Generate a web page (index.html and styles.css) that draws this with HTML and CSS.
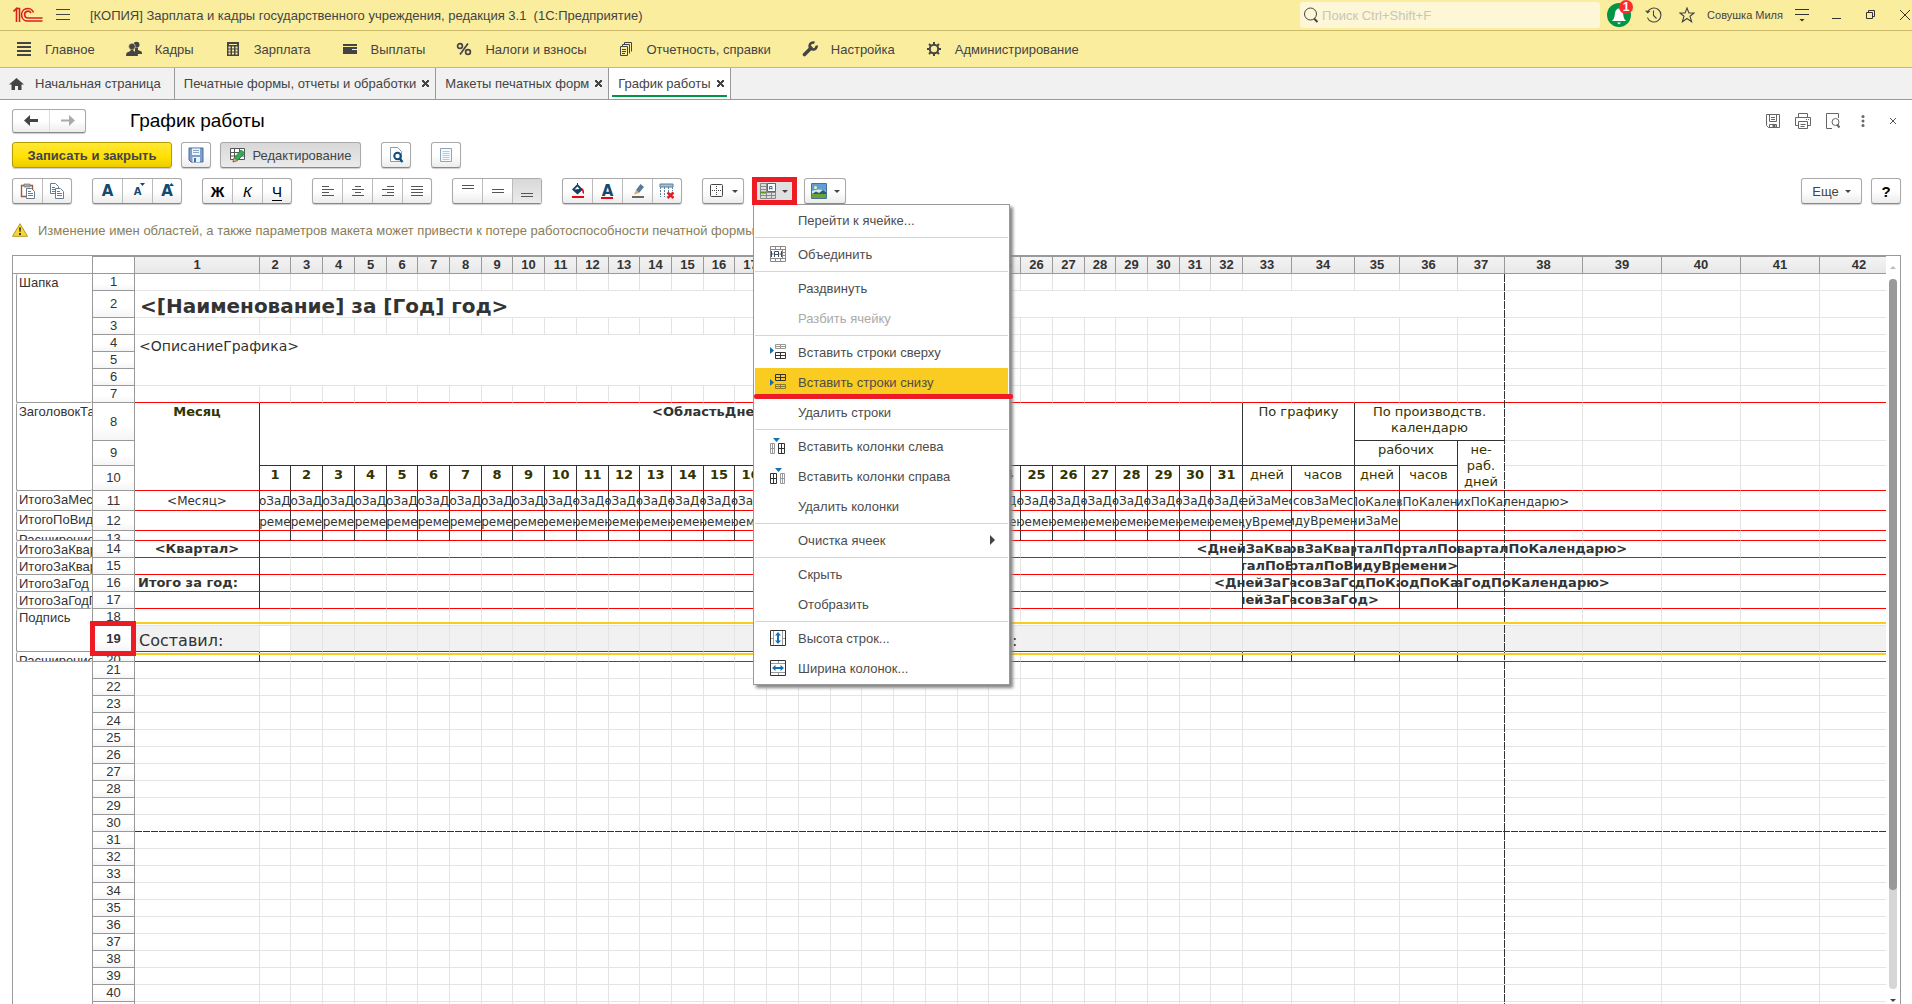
FILE: index.html
```html
<!DOCTYPE html>
<html lang="ru">
<head>
    <meta charset="UTF-8">
    <meta name="viewport" content="width=device-width, initial-scale=1.0">
    <title>График работы</title>
    <link rel="stylesheet" href="styles.css">
</head>
<body>
    <header class="topbar">
        <svg class="logo" width="30" height="16" viewBox="0 0 30 16" fill="none" stroke="#d9201f" stroke-width="1.6">
            <path d="M0.5 4.5L3.5 1.5V15M3.5 1.5H6.5V15"/>
            <path d="M20.5 5.5A6.2 6.2 0 1 0 15 14H29.5"/>
            <path d="M18 6A3.4 3.4 0 1 0 15 11H29.5"/>
        </svg>
        <button class="plain burger" aria-label="Меню">
            <svg width="16" height="14" viewBox="0 0 16 14" stroke="#444" stroke-width="1"><path d="M1 1.5H15M1 6.5H15M1 11.5H15"/></svg>
        </button>
        <div class="app-title">[КОПИЯ] Зарплата и кадры государственного учреждения, редакция 3.1&nbsp; (1С:Предприятие)</div>
        <label class="search">
            <svg width="16" height="16" viewBox="0 0 16 16" fill="none" stroke="#444"><circle cx="7.5" cy="7" r="6"/><path d="M11 11.500L14.500 15" stroke-width="2"/></svg>
            <input type="text" placeholder="Поиск Ctrl+Shift+F" aria-label="Поиск">
        </label>
        <button class="plain bell" aria-label="Оповещения">
            <svg width="24" height="24" viewBox="0 0 24 24"><circle cx="12" cy="12" r="12" fill="#009646"/><path d="M5 18C7.500 16 7.500 13 8 10C8.500 7 10 5.500 12 5.500S15.500 7 16 10C16.500 13 16.500 16 19 18Z" fill="#fff"/><path d="M10 19.500H14L12 21.500Z" fill="#fff"/></svg>
            <span class="badge">1</span>
        </button>
        <button class="plain history" aria-label="История">
            <svg width="17" height="16" viewBox="0 0 17 16" fill="none" stroke="#444" stroke-width="1.1"><path d="M2.500 5.200A7 7 0 1 1 2.400 10.600M8.500 3.500V8.500L11.500 11.500"/><path d="M0 3.500L2.500 6.500L5.500 4Z" fill="#444" stroke="none"/></svg>
        </button>
        <button class="plain star" aria-label="Избранное">
            <svg width="16" height="16" viewBox="0 0 16 16" fill="none" stroke="#444" stroke-width="1.1"><path d="M8 1L9.900 6H15L11 9.200L12.600 14.800L8 11.500L3.400 14.800L5 9.200L1 6H6.100Z"/></svg>
        </button>
        <a class="user" href="#">Совушка Миля</a>
        <button class="plain view" aria-label="Настройки вида">
            <svg width="14" height="14" viewBox="0 0 14 14" stroke="#333"><path d="M0 1.500H14M0 6.500H14"/><path d="M4.500 11L7 13.500L9.500 11Z" fill="#333" stroke="none"/></svg>
        </button>
        <button class="plain win" aria-label="Свернуть"><svg width="10" height="10" viewBox="0 0 10 10" stroke="#333"><path d="M0 8.500H9"/></svg></button>
        <button class="plain win" aria-label="Развернуть"><svg width="10" height="10" viewBox="0 0 10 10" fill="none" stroke="#333"><path d="M.5 2.500H6.500V8.500H.5ZM2.500 2.500V.5H8.500V6.500H6.500"/></svg></button>
        <button class="plain win" aria-label="Закрыть"><svg width="10" height="10" viewBox="0 0 10 10" stroke="#333"><path d="M0 0L10 10M10 0L0 10"/></svg></button>
    </header>

    <nav class="sections">
        <a href="#"><svg width="16" height="16" viewBox="0 0 16 16" stroke="#444" stroke-width="2"><path d="M1 2H15M1 6H15M1 10H15M1 14H15"/></svg>Главное</a>
        <a href="#"><svg width="16" height="16" viewBox="0 0 16 16" fill="#444"><circle cx="10.500" cy="3.800" r="3"/><path d="M9 7H12V9L15.500 10.500Q16 11 16 13H9Z"/><circle cx="6" cy="5.500" r="3.300" stroke="#fbed9e" stroke-width=".6"/><path d="M4.500 8.500H7.500V10L11 11.500Q12 12 12 15H0Q0 12 1 11.500L4.500 10Z"/></svg>Кадры</a>
        <a href="#"><svg width="16" height="16" viewBox="0 0 16 16" fill="none" stroke="#444"><rect x="2" y="1" width="12" height="14" fill="#444" stroke="none"/><path d="M4 3.500H12" stroke="#fbed9e"/><path d="M3.500 6.500H5.500M7 6.500H9M10.500 6.500H12.500M3.500 9.500H5.500M7 9.500H9M10.500 9.500H12.500M3.500 12.500H5.500M7 12.500H9M10.500 12.500H12.500" stroke="#fbed9e" stroke-width="2"/></svg>Зарплата</a>
        <a href="#"><svg width="16" height="16" viewBox="0 0 16 16" fill="#444"><path d="M1 3H15V5H1ZM1 6H15V13H1Z"/><path d="M10 8H15V9H10Z" fill="#fbed9e"/></svg>Выплаты</a>
        <a href="#"><svg width="16" height="16" viewBox="0 0 16 16" fill="none" stroke="#444" stroke-width="1.700"><circle cx="4" cy="5" r="2.400"/><circle cx="12" cy="11" r="2.400"/><path d="M12 2.500L4 13.500"/></svg>Налоги и взносы</a>
        <a href="#"><svg width="16" height="16" viewBox="0 0 16 16" fill="none" stroke="#444"><path d="M2.500 5.500H9.500V14.500H2.500ZM4.500 5V3.500H11.500V12.500M6.500 3V1.500H13.500V10.500M4 8.500H8M4 10.500H8M4 12.500H7"/></svg>Отчетность, справки</a>
        <a href="#"><svg width="16" height="16" viewBox="0 0 16 16" fill="none" stroke="#444"><path d="M2.500 13.500L9 7" stroke-width="3.600" stroke-linecap="round"/><path d="M12.500 1.800A3.500 3.500 0 1 0 14.600 4.500" stroke-width="2.600"/></svg>Настройка</a>
        <a href="#"><svg width="16" height="16" viewBox="0 0 16 16" fill="none" stroke="#444" stroke-width="2"><circle cx="8" cy="8" r="4.200"/><path d="M8 1V4M8 12V15M1 8H4M12 8H15M3 3L5 5M11 11L13 13M13 3L11 5M5 11L3 13"/></svg>Администрирование</a>
    </nav>

    <nav class="tabs">
        <a class="tab home" href="#"><svg width="15" height="14" viewBox="0 0 15 14" fill="#444"><path d="M7.500 1L0 7.500H2.500V13H6V9H9V13H12.500V7.500H15Z"/></svg>Начальная страница</a>
        <a class="tab" href="#">Печатные формы, отчеты и обработки<span class="close"></span></a>
        <a class="tab" href="#">Макеты печатных форм<span class="close"></span></a>
        <a class="tab active" href="#">График работы<span class="close"></span></a>
    </nav>

    <main class="form">
        <div class="form-head">
            <div class="group nav-buttons">
                <button aria-label="Назад"><svg width="15" height="11" viewBox="0 0 15 11"><path d="M0 5.500L6 0V4H14V7H6V11Z" fill="#444"/></svg></button>
                <button aria-label="Вперед"><svg width="15" height="11" viewBox="0 0 15 11"><path d="M15 5.500L9 0V4.500H1V6.500H9V11Z" fill="#aaa"/></svg></button>
            </div>
            <h1>График работы</h1>
            <div class="form-tools">
                <button class="plain" aria-label="Сохранить"><svg width="16" height="16" viewBox="0 0 16 16" fill="none" stroke="#666"><path d="M1.500 1.500H14.500V14.500H3.500L1.500 12.500ZM4.500 2V8.500H11.500V2M6 4.500H10M6 6.500H10M4.500 14V11.500H11.500V14"/><path d="M8 12H10V14H8Z" fill="#666"/></svg></button>
                <button class="plain" aria-label="Печать"><svg width="16" height="16" viewBox="0 0 16 16" fill="none" stroke="#666"><path d="M3.500 4.500V.5H12.500V4.500M3.500 12.500H.5V4.500H15.500V12.500H12.500M3.500 8.500H12.500V15.500H3.500ZM5.500 11.500H10.500M5.500 13.500H9.500M11 6.500H12M13 6.500H14"/></svg></button>
                <button class="plain" aria-label="Предварительный просмотр"><svg width="16" height="16" viewBox="0 0 16 16" fill="none" stroke="#666"><path d="M7 15.500H1.500V.5H13.500V5"/><circle cx="10.500" cy="9" r="3.500"/><path d="M12 11.500L14.500 14.500" stroke-width="2"/></svg></button>
                <button class="plain" aria-label="Ещё"><svg width="16" height="16" viewBox="0 0 16 16" fill="#666"><circle cx="8" cy="3.500" r="1.500"/><circle cx="8" cy="8" r="1.500"/><circle cx="8" cy="12.500" r="1.500"/></svg></button>
                <button class="plain" aria-label="Закрыть форму"><svg width="16" height="16" viewBox="0 0 16 16" stroke="#555"><path d="M5 5L11 11M11 5L5 11"/></svg></button>
            </div>
        </div>

        <div class="toolbar commands">
            <button class="btn primary">Записать и закрыть</button>
            <button class="btn icon" aria-label="Записать"><svg width="16" height="16" viewBox="0 0 16 16"><path d="M1 1H15V15H3L1 13Z" fill="#7d9fc9" stroke="#456f9f"/><path d="M4 1.500H12V8H4ZM4.500 10H12V15H4.500Z" fill="#edf5fc"/><path d="M5 3.500H11M5 5.500H11" stroke="#8aa6c5"/><path d="M6 11H8V15H6Z" fill="#456f9f"/></svg></button>
            <button class="btn edit pressed">
                <svg width="17" height="16" viewBox="0 0 17 16"><path d="M1.500 1.500H15.500V12.500H1.500ZM1.500 5.500H15.500M1.500 9H15.500M5.500 1V13M10.500 1V13" fill="#fff" stroke="#555"/><path d="M4 15L5 11L12 3L16 6L8.500 13.500Z" fill="#36a85c" stroke="#1f7a41" stroke-width=".7"/><path d="M4 15L5 11L8.500 13.500Z" fill="#e3b070" stroke="#7a5b30" stroke-width=".5"/></svg>
                Редактирование
            </button>
            <button class="btn icon gap" aria-label="Просмотр"><svg width="16" height="16" viewBox="0 0 16 16" fill="none"><path d="M2.500 .5H9.500L13.500 4.500V14.500H2.500Z" fill="#fff" stroke="#8a9bab"/><circle cx="9.500" cy="9" r="3.200" stroke="#0b4f82" stroke-width="2"/><path d="M11.500 11.500L14.500 15" stroke="#0b4f82" stroke-width="2.400"/></svg></button>
            <button class="btn icon gap" aria-label="Свойства"><svg width="16" height="16" viewBox="0 0 16 16"><path d="M2.500 1.500H13.500V14.500H2.500Z" fill="#f5fafd" stroke="#8da5b8"/><path d="M4.500 4.500H11.500M4.500 6.500H11.500M4.500 8.500H11.500M4.500 10.500H11.500M4.500 12.500H11.500" stroke="#b4cddd"/></svg></button>
        </div>

        <div class="toolbar format">
            <div class="group">
                <button aria-label="Вставить"><svg width="16" height="16" viewBox="0 0 16 16" fill="none"><path d="M1.500 2.500H12.500V13.500H1.500Z" stroke="#a05a38" stroke-width="1.400"/><path d="M4 1H10V4H4Z" fill="#aaa" stroke="#777" stroke-width=".7"/><path d="M6.500 5.500H11.500L14.500 8.500V15.500H6.500Z" fill="#fff" stroke="#6a7d90"/><path d="M8 8.500H11M8 10.500H13M8 12.500H13" stroke="#6a7d90"/></svg></button>
                <button aria-label="Копировать"><svg width="16" height="16" viewBox="0 0 16 16" fill="#fff" stroke="#6a7d90"><path d="M1.500 .5H6.500L9.500 3.500V10.500H1.500ZM3 4.500H6M3 6.500H8M3 8.500H8"/><path d="M6.500 5.500H11.500L14.500 8.500V15.500H6.500ZM8 8.500H11M8 10.500H13M8 12.500H13"/></svg></button>
            </div>
            <div class="group">
                <button class="glyph navy" aria-label="Шрифт">А</button>
                <button class="glyph navy small" aria-label="Уменьшить шрифт">А<svg class="corner" width="5" height="3" viewBox="0 0 5 3"><path d="M0 0H5L2.500 3Z" fill="#134a6e"/></svg></button>
                <button class="glyph navy" aria-label="Увеличить шрифт">А<svg class="corner" width="5" height="3" viewBox="0 0 5 3"><path d="M0 3H5L2.500 0Z" fill="#134a6e"/></svg></button>
            </div>
            <div class="group">
                <button class="glyph">Ж</button>
                <button class="glyph italic">К</button>
                <button class="glyph under">Ч</button>
            </div>
            <div class="group">
                <button aria-label="По левому краю"><svg width="16" height="16" viewBox="0 0 16 16" stroke="#555"><path d="M2 3.500H9M2 6.500H14M2 9.500H9M2 12.500H14"/></svg></button>
                <button aria-label="По центру"><svg width="16" height="16" viewBox="0 0 16 16" stroke="#555"><path d="M5 3.500H11M2 6.500H14M5 9.500H11M2 12.500H14"/></svg></button>
                <button aria-label="По правому краю"><svg width="16" height="16" viewBox="0 0 16 16" stroke="#555"><path d="M7 3.500H14M2 6.500H14M7 9.500H14M2 12.500H14"/></svg></button>
                <button aria-label="По ширине"><svg width="16" height="16" viewBox="0 0 16 16" stroke="#555"><path d="M2 3.500H14M2 6.500H14M2 9.500H14M2 12.500H14"/></svg></button>
            </div>
            <div class="group">
                <button aria-label="По верху"><svg width="16" height="16" viewBox="0 0 16 16" stroke="#555"><path d="M2 2.500H14M2 5.500H14"/></svg></button>
                <button aria-label="По середине"><svg width="16" height="16" viewBox="0 0 16 16" stroke="#555"><path d="M2 6.500H14M2 9.500H14"/></svg></button>
                <button class="pressed" aria-label="По низу"><svg width="16" height="16" viewBox="0 0 16 16" stroke="#555"><path d="M2 10.500H14M2 13.500H14"/></svg></button>
            </div>
            <div class="group">
                <button aria-label="Цвет фона"><svg width="16" height="16" viewBox="0 0 16 16"><path d="M7.500 1L13 6.500L7.500 11.500L2 6.500Z" fill="#123f63"/><path d="M7.500 0V5" stroke="#123f63"/><path d="M4.500 6.500L7.500 3.500L9.500 6Z" fill="#fff"/><path d="M11 5Q14.500 5 14 11Q12 10 12 7Z" fill="#e30613"/><path d="M2 13H14V15H2Z" fill="#e30613"/></svg></button>
                <button class="glyph navy red-line" aria-label="Цвет текста">А</button>
                <button aria-label="Цвет рамки"><svg width="16" height="16" viewBox="0 0 16 16"><path d="M6 7L10.500 1L14 4L9 10Z" fill="#577a99"/><path d="M4 11.500L6 7L9 10Z" fill="#d9a864"/><path d="M2 13H14V15H2Z" fill="#666"/></svg></button>
                <button aria-label="Очистить"><svg width="16" height="16" viewBox="0 0 16 16" fill="none" stroke="#5d7f9b"><path d="M1 1H14V4H1Z" fill="#a9c0d4"/><path d="M1.500 4V14M5.500 4V14M9.500 4V14M13.500 4V8" stroke-dasharray="2 1"/><path d="M8.500 9.500L14.500 15M14.500 9.500L8.500 15" stroke="#d92027" stroke-width="2.400"/></svg></button>
            </div>
            <div class="group">
                <button class="drop" aria-label="Рамки"><svg width="16" height="16" viewBox="0 0 16 16" fill="none" stroke="#444"><rect x="1.500" y="1.500" width="12" height="12" rx="1"/><path d="M7.500 3V12M3 7.500H12" stroke-dasharray="1 1"/></svg><i class="arrow"></i></button>
            </div>
            <div class="menu-anchor">
                <button class="cells-button" aria-label="Ячейки"><svg width="17" height="16" viewBox="0 0 17 16" fill="none" stroke="#888"><path d="M.5 .5H15.500V15.500H.5ZM.5 3.500H7M.5 6.500H7M.5 12.500H15.500M.5 9.500H15.500M6.500 0V16M11.500 9V16" fill="#ddd"/><path d="M7.500 .5H15.500V8.500H7.500Z" fill="#fff" stroke="#3d6f99"/><path d="M9.500 6.500V3.500H12V6.500M9.500 5.500H12" stroke="#3d6f99"/><path d="M0 9.500H6" stroke="#5a9b1e" stroke-width="2"/></svg><i class="arrow"></i></button>
                <ul class="menu">
                    <li><button>Перейти к ячейке...</button></li>
                    <li class="sep"></li>
                    <li><button><svg width="16" height="16" viewBox="0 0 16 16" fill="none" stroke="#888"><path d="M.5 .5H15.500V15.500H.5ZM0 3.500H16M0 12.500H16M5.500 0V3M10.500 0V3M5.500 13V16M10.500 13V16M12.500 3V13M12.500 6.500H16M12.500 9.500H16"/><path d="M1.500 5V11M11.500 5V11M1.500 8H3.500M9.500 8H11.500M4.500 11V5.500H8.500V11M4.500 8.500H8.500" stroke="#3b4f63"/></svg>Объединить</button></li>
                    <li class="sep"></li>
                    <li><button>Раздвинуть</button></li>
                    <li><button disabled>Разбить ячейку</button></li>
                    <li class="sep"></li>
                    <li><button><svg width="16" height="16" viewBox="0 0 16 16" fill="none"><path d="M0 3L4 6.500L0 10Z" fill="#1070b8"/><path d="M5.500 .5H15.500V4.500H5.500ZM5 2.500H16M10.500 0V5" stroke="#999"/><path d="M5.500 8.500H15.500V14.500H5.500ZM5 11.500H16M10.500 8V15" stroke="#333"/></svg>Вставить строки сверху</button></li>
                    <li class="current"><button><svg width="16" height="16" viewBox="0 0 16 16" fill="none"><path d="M0 5L4 8.500L0 12Z" fill="#1070b8"/><path d="M5.500 .5H15.500V6.500H5.500ZM5 3.500H16M10.500 0V7" stroke="#333"/><path d="M5.500 10.500H15.500V14.500H5.500ZM5 12.500H16M10.500 10V15" stroke="#8a7a2c"/></svg>Вставить строки снизу</button></li>
                    <li><button>Удалить строки</button></li>
                    <li class="sep"></li>
                    <li><button><svg width="16" height="16" viewBox="0 0 16 16" fill="none"><path d="M3 0H10L6.500 4Z" fill="#1070b8"/><path d="M.5 5.500H4.500V15.500H.5ZM2.500 5V16M0 10.500H5" stroke="#999"/><path d="M8.500 5.500H14.500V15.500H8.500ZM11.500 5V16M8 10.500H15" stroke="#333"/></svg>Вставить колонки слева</button></li>
                    <li><button><svg width="16" height="16" viewBox="0 0 16 16" fill="none"><path d="M5 0H12L8.500 4Z" fill="#1070b8"/><path d="M.5 5.500H6.500V15.500H.5ZM3.500 5V16M0 10.500H7" stroke="#333"/><path d="M10.500 5.500H14.500V15.500H10.500ZM12.500 5V16M10 10.500H15" stroke="#999"/></svg>Вставить колонки справа</button></li>
                    <li><button>Удалить колонки</button></li>
                    <li class="sep"></li>
                    <li><button>Очистка ячеек<i class="sub"></i></button></li>
                    <li class="sep"></li>
                    <li><button>Скрыть</button></li>
                    <li><button>Отобразить</button></li>
                    <li class="sep"></li>
                    <li><button><svg width="16" height="16" viewBox="0 0 16 16" fill="none"><path d="M.5 .5H15.500V15.500H.5Z" stroke="#333"/><path d="M3.500 1V15M12.500 1V15M1 8.500H3M13 8.500H15" stroke="#999"/><path d="M8 2L11 5.500H9V10.500H11L8 14L5 10.500H7V5.500H5Z" fill="#1070b8"/></svg>Высота строк...</button></li>
                    <li><button><svg width="16" height="16" viewBox="0 0 16 16" fill="none"><path d="M.5 .5H15.500V15.500H.5Z" stroke="#333"/><path d="M1 3.500H15M1 12.500H15M8.500 1V3M8.500 13V15" stroke="#999"/><path d="M2 8L5.500 5V7H10.500V5L14 8L10.500 11V9H5.500V11Z" fill="#1070b8"/></svg>Ширина колонок...</button></li>
                </ul>
            </div>
            <div class="group picture">
                <button class="drop" aria-label="Картинка"><svg width="16" height="16" viewBox="0 0 16 16"><path d="M1 1H15V15H1Z" fill="#5f9ed6"/><path d="M1 8Q8 5 15 8V11H1Z" fill="#d3e8f8"/><path d="M1 11L5 8.500L8 10L12 7L15 9V12H1Z" fill="#335577"/><path d="M1 11H15V15H1Z" fill="#68a52d"/><circle cx="4.500" cy="4.500" r="1.500" fill="#fff26b"/><path d="M.5 .5H15.500V15.500H.5Z" fill="none" stroke="#45729b"/></svg><i class="arrow"></i></button>
            </div>
            <button class="btn more">Еще<i class="arrow"></i></button>
            <button class="btn icon help">?</button>
        </div>

        <p class="warning">
            <svg width="16" height="14" viewBox="0 0 16 14"><path d="M8 .7L15.500 13.300H.5Z" fill="#f7d63a" stroke="#b99a1c"/><path d="M7 4.500H9L8.500 9H7.500ZM7 10H9V12H7Z" fill="#333"/></svg>
            Изменение имен областей, а также параметров макета может привести к потере работоспособности печатной формы.
        </p>

        <div class="sheet">
            <div class="sheet-view">
                <table id="grid"></table>
                <div id="break-v" class="page-break vertical"></div>
                <div id="break-h" class="page-break horizontal"></div>
                <div id="selection" class="selection"></div>
                <div id="row-mark" class="row-mark"></div>
            </div>
            <div class="scrollbar">
                <i class="up"></i>
                <div class="track"><div class="thumb"></div></div>
                <i class="down"></i>
            </div>
        </div>
    </main>

    <script src="sheet.js"></script>
</body>
</html>
```
FILE: styles.css
```css
* {
    box-sizing: border-box;
}

body {
    margin: 0;
    height: 100vh;
    display: flex;
    flex-direction: column;
    overflow: hidden;
    background: #fff;
    color: #444;
    font-family: "Liberation Sans", Arial, sans-serif;
    font-size: 13px;
}

a {
    color: inherit;
    text-decoration: none;
}

svg {
    display: block;
    flex: none;
}

button,
input {
    font: inherit;
    color: inherit;
    margin: 0;
    padding: 0;
}

button.plain {
    display: flex;
    align-items: center;
    justify-content: center;
    border: none;
    background: none;
}

/* title bar */
.topbar {
    display: flex;
    align-items: center;
    flex: none;
    height: 31px;
    padding-left: 13px;
    background: #fbed9e;
    border-bottom: 1px solid #c9b968;
}

.burger {
    margin-left: 12px;
    width: 16px;
}

.app-title {
    flex: 1;
    margin-left: 19px;
}

.search {
    display: flex;
    align-items: center;
    gap: 3px;
    width: 300px;
    height: 26px;
    padding-left: 3px;
    border-radius: 3px;
    background: #fdf6d7;
}

.search input {
    flex: 1;
    min-width: 0;
    border: none;
    outline: none;
    background: none;
}

.search input::placeholder {
    color: #c8c6b8;
}

.bell {
    position: relative;
    margin-left: 7px;
}

.badge {
    position: absolute;
    top: -3px;
    right: -2px;
    width: 14px;
    height: 14px;
    border-radius: 7px;
    background: #fc2b2e;
    color: #fff;
    font-size: 12px;
    font-weight: bold;
    line-height: 14px;
}

.history {
    margin-left: 14px;
}

.star {
    margin-left: 17px;
}

.user {
    margin-left: 12px;
    font-size: 11px;
}

.view {
    margin-left: 12px;
}

.win {
    width: 10px;
    margin-left: 24px;
}

.view + .win {
    margin-left: 23px;
}

.win:last-child {
    margin-right: 2px;
}

/* sections */
.sections {
    display: flex;
    align-items: center;
    flex: none;
    gap: 31px;
    height: 37px;
    padding-left: 16px;
    background: #fbed9e;
    border-bottom: 1px solid #c9b968;
}

.sections a {
    display: flex;
    align-items: center;
    gap: 13px;
}

/* open windows */
.tabs {
    display: flex;
    flex: none;
    height: 32px;
    background: #f1f1f1;
    border-bottom: 1px solid #999;
}

.tab {
    position: relative;
    display: flex;
    align-items: center;
    padding: 0 6px 0 9px;
    border-right: 1px solid #999;
}

.tab.home {
    gap: 11px;
    padding-right: 13px;
}

.tab.active {
    background: #fff;
}

.tab.active::after {
    content: "";
    position: absolute;
    left: 3px;
    right: 3px;
    bottom: 2px;
    height: 2px;
    background: #009646;
}

.close {
    width: 7px;
    height: 7px;
    margin-left: 6px;
    background:
        linear-gradient(45deg, transparent 42%, #444 42% 58%, transparent 58%),
        linear-gradient(135deg, transparent 42%, #444 42% 58%, transparent 58%);
}

/* form */
.form {
    display: flex;
    flex-direction: column;
    flex: 1;
    min-height: 0;
    padding: 8px 11px 0 12px;
}

.form-head {
    display: flex;
    align-items: center;
    flex: none;
    height: 25px;
}

h1 {
    flex: 1;
    margin: 0 0 0 44px;
    color: #000;
    font-size: 19px;
    font-weight: normal;
}

.form-tools {
    display: flex;
    margin-right: -7px;
}

.form-tools button {
    width: 30px;
}

.toolbar {
    display: flex;
    flex: none;
    height: 27px;
}

.commands {
    margin-top: 9px;
}

.format {
    gap: 20px;
    margin-top: 9px;
}

.btn,
.group {
    border: 1px solid #aaa;
    border-bottom-color: #888;
    border-radius: 3px;
    background: linear-gradient(#fff 50%, #ececec);
    box-shadow: 0 1px 1px #ccc;
}

.btn {
    display: flex;
    align-items: center;
    justify-content: center;
    height: 26px;
}

.btn.icon {
    width: 30px;
}

.btn.primary {
    width: 160px;
    border-color: #b39b00;
    background: linear-gradient(#ffe838, #ffe000 60%, #edcb00);
    font-weight: bold;
}

.primary + .icon,
.edit {
    margin-left: 9px;
}

.btn.edit {
    width: 141px;
    gap: 6px;
}

.btn.gap {
    margin-left: 20px;
}

.pressed,
.group .pressed {
    background: linear-gradient(#d8d8d8, #ebebeb);
}

.group {
    display: flex;
    height: 26px;
}

.group button {
    position: relative;
    display: flex;
    align-items: center;
    justify-content: center;
    width: 30px;
    border: none;
    border-left: 1px solid #bbb;
    background: none;
}

.group button:first-child {
    width: 29px;
    border-left: none;
}

.group button:last-child {
    width: 29px;
}

.nav-buttons {
    height: 24px;
}

.group.nav-buttons button {
    width: 36px;
    border-color: #ddd;
}

.glyph {
    color: #000;
    font-size: 15px;
    font-weight: bold;
}

.group .navy {
    color: #134a6e;
    font-family: "DejaVu Sans", Verdana, sans-serif;
    font-size: 15px;
}

.group .small {
    font-size: 10px;
}

.group .italic {
    font-style: italic;
    font-weight: normal;
}

.group .under {
    font-weight: normal;
    text-decoration: underline;
    text-underline-offset: 3px;
}

.corner {
    position: absolute;
    top: 4px;
    right: 7px;
}

.red-line::after {
    content: "";
    position: absolute;
    left: 8px;
    bottom: 4px;
    width: 12px;
    height: 2px;
    background: #e30613;
}

.group .drop:first-child {
    width: 40px;
    gap: 7px;
}

.arrow {
    border: 3px solid transparent;
    border-top-color: #444;
    border-bottom: none;
}

.more {
    gap: 6px;
    width: 61px;
    margin-left: auto;
}

.btn.help {
    margin-left: -11px;
    color: #000;
    font-size: 15px;
    font-weight: bold;
}

/* cells menu */
.menu-anchor {
    position: relative;
    width: 45px;
    height: 28px;
    margin: -1px -13px 0 -12px;
}

.cells-button {
    position: relative;
    z-index: 6;
    display: flex;
    align-items: center;
    gap: 5px;
    width: 45px;
    height: 28px;
    padding-left: 3px;
    border: 5px solid #ed1c24;
    background: #e0e0e0;
}

.menu {
    position: absolute;
    z-index: 5;
    top: 27px;
    left: 1px;
    width: 257px;
    margin: 0;
    padding: 1px 1px 0;
    border: 1px solid #999;
    background: #fff;
    box-shadow: 3px 3px 3px #888;
    list-style: none;
}

.menu button {
    display: flex;
    align-items: center;
    width: 100%;
    height: 30px;
    padding: 0 0 2px 43px;
    border: none;
    background: none;
    color: #4d4d4d;
}

.menu svg {
    margin: 0 12px 0 -28px;
}

.menu button:disabled {
    color: #aaa;
}

.menu .sep {
    height: 1px;
    margin: 1px 0 2px;
    background: #d8d5c5;
}

.menu .current {
    position: relative;
    background: #facb20;
}

.menu .current::after {
    content: "";
    position: absolute;
    left: -1px;
    right: -5px;
    bottom: -1px;
    height: 5px;
    border-radius: 2px;
    background: #ed1c24;
}

.sub {
    margin: 0 13px 0 auto;
    border: 5px solid transparent;
    border-left-color: #444;
    border-right: none;
}

.warning {
    display: flex;
    align-items: center;
    flex: none;
    gap: 10px;
    height: 14px;
    margin: 18px 0;
    color: #8a7d5a;
}

/* spreadsheet */
.sheet {
    display: flex;
    flex: 1;
    min-height: 0;
    border: 1px solid #999;
    border-bottom: none;
}

.sheet-view {
    position: relative;
    flex: 1;
    min-width: 0;
    overflow: hidden;
}

#grid {
    table-layout: fixed;
    border-collapse: separate;
    border-spacing: 0;
    color: #333;
}

#grid th,
#grid td {
    padding: 0;
    border: 0 solid #e4e4e4;
    border-width: 0 1px 1px 0;
    font-weight: normal;
}

#grid thead th {
    border-color: #999;
    background: linear-gradient(#f4f4f4, #e8e8e8);
    font-weight: bold;
    line-height: 16px;
    padding-top: 1px;
    box-shadow: inset 0 1px #999;
}

#grid thead th.corner-name,
#grid thead th.corner-num {
    background: #fff;
}

#grid thead th.corner-name {
    box-shadow: none;
}

#grid th.num {
    border-color: #999;
    background: linear-gradient(#fff 60%, #f5f5f5);
}

#grid th.name {
    border-width: 0 1px 0 0;
    border-color: #999;
    text-align: left;
    vertical-align: top;
}

.area {
    margin-left: 3px;
    padding-left: 2px;
    border: 1px solid #999;
    border-width: 0 0 1px 1px;
    border-radius: 2px;
    overflow: hidden;
    line-height: 17px;
    white-space: nowrap;
}

.cell {
    display: flex;
    align-items: safe center;
    overflow: hidden;
    font-family: "DejaVu Sans", Verdana, sans-serif;
    font-size: 12px;
    line-height: 16px;
    white-space: nowrap;
}

.num .cell {
    justify-content: center;
    font-family: "Liberation Sans", Arial, sans-serif;
    font-size: 13px;
}

#grid .edge-right {
    border-right-color: #333;
}

#grid .edge-bottom {
    border-bottom-color: #333;
}

#grid .area-end {
    border-bottom-color: #f00;
}

.center .cell {
    justify-content: center;
    text-align: center;
}

.top .cell {
    align-items: flex-start;
    padding-top: 1px;
}

.low .cell {
    align-items: flex-end;
}

.head .cell {
    color: #333300;
    font-size: 13px;
}

.bold .cell {
    font-size: 13px;
    font-weight: bold;
}

.total .cell {
    padding-left: 3px;
}

.wrap .cell {
    white-space: pre-line;
}

.spill-left .cell {
    overflow: visible;
    clip-path: inset(0 0 0 -100px);
}

.spill-right .cell {
    overflow: visible;
    clip-path: inset(0 -200px 0 0);
}

.spill-next .cell {
    overflow: visible;
    clip-path: inset(0 -45px 0 0);
}

.title .cell {
    align-items: flex-end;
    padding-left: 5px;
    font-size: 20px;
    line-height: 22px;
}

.note .cell {
    align-items: flex-start;
    padding: 3px 0 0 4px;
    font-size: 14px;
}

.sign .cell {
    align-items: flex-end;
    padding-left: 4px;
    font-size: 16px;
    line-height: 20px;
}

/* selected row */
.selected td {
    background: #f1f1f1;
}

.selected td.active {
    background: #fff;
}

.selected .num .cell {
    font-weight: bold;
}

.selection {
    position: absolute;
    left: 122px;
    right: 0;
    height: 33px;
    border: solid #facb20;
    border-width: 2px 0;
}

.row-mark {
    position: absolute;
    left: 77px;
    width: 46px;
    height: 35px;
    border: 5px solid #ed1c24;
}

.page-break {
    position: absolute;
}

.page-break.vertical {
    top: 18px;
    bottom: 0;
    width: 1px;
    background: repeating-linear-gradient(#333 0 8px, #fff 8px 9px);
}

.page-break.horizontal {
    left: 122px;
    right: 0;
    height: 1px;
    background: repeating-linear-gradient(90deg, #333 0 7px, #fff 7px 8px);
}

.scrollbar {
    display: flex;
    flex-direction: column;
    align-items: center;
    flex: none;
    width: 14px;
    padding: 10px 0 0;
}

.up {
    border: 3px solid transparent;
    border-top: none;
    border-bottom-color: #bbb;
}

.down {
    margin: 10px 0 2px;
    border: 3px solid transparent;
    border-bottom: none;
    border-top-color: #444;
}

.track {
    flex: 1;
    width: 8px;
    margin-top: 10px;
    border-radius: 4px;
    background: #d6d6d6;
}

.thumb {
    height: 86%;
    border-radius: 4px;
    background: #999;
}
```
FILE: sheet.js
```javascript
const NAME_WIDTH = 80;
const NUM_WIDTH = 42;
const ROW_COUNT = 41;

const colWidths = [125,
    31, 32, 32, 32, 31, 32, 32, 31, 32, 32, 32, 31, 32, 32, 31,
    32, 32, 32, 31, 32, 32, 32, 31, 32, 32, 32, 31, 32, 32, 31, 32,
    49, 63, 45, 58, 47, 78, 79, 79, 79, 79];

const rowHeights = { 2: 27, 8: 38, 9: 25, 10: 25, 11: 20, 12: 20, 13: 10, 19: 26, 20: 10 };
const areaEnds = [7, 10, 11, 12, 13, 14, 15, 16, 17, 19, 20];

const areas = {
    1: ['Шапка', 7],
    8: ['ЗаголовокТаблицы', 3],
    11: ['ИтогоЗаМесяц', 1],
    12: ['ИтогоПоВидуВремени', 1],
    13: ['Расширение', 1],
    14: ['ИтогоЗаКвартал', 1],
    15: ['ИтогоЗаКварталПоВидуВремени', 1],
    16: ['ИтогоЗаГод', 1],
    17: ['ИтогоЗаГодПоВидуВремени', 1],
    18: ['Подпись', 2],
    20: ['Расширение', 1]
};

// key is "row:column"
const cells = {
    '2:1': { text: '<[Наименование] за [Год] год>', cols: 37, cls: 'bold title' },
    '4:1': { text: '<ОписаниеГрафика>', cols: 20, rows: 3, cls: 'note' },
    '8:1': { text: 'Месяц', rows: 3, cls: 'head bold center top' },
    '8:2': { text: '<ОбластьДнейПоМесяцу>', cols: 31, rows: 2, cls: 'bold center top edge-bottom' },
    '8:33': { text: 'По графику', cols: 2, rows: 2, cls: 'head center top edge-bottom' },
    '8:35': { text: 'По производств.\nкалендарю', cols: 3, cls: 'head center top wrap edge-bottom' },
    '9:35': { text: 'рабочих', cols: 2, cls: 'head center top edge-bottom' },
    '9:37': { text: 'не-\nраб.\nдней', rows: 2, cls: 'head center top wrap' },
    '10:33': { text: 'дней', cls: 'head center top' },
    '10:34': { text: 'часов', cls: 'head center top' },
    '10:35': { text: 'дней', cls: 'head center top' },
    '10:36': { text: 'часов', cls: 'head center top' },
    '11:1': { text: '<Месяц>', cls: 'center' },
    '11:33': { text: '<ДнейЗаМесяц>', cls: 'center' },
    '11:34': { text: '<ЧасовЗаМесяц>', cls: 'center' },
    '11:35': { text: '<ДнейПоКалендарю>', cls: 'center low' },
    '11:36': { text: '<ЧасовПоКалендарю>', cls: 'center low' },
    '11:37': { text: '<НерабочихПоКалендарю>', cls: 'center low spill-right' },
    '12:33': { text: '<ДнейПоВидуВремениЗаМесяц>', cls: 'center low' },
    '12:34': { text: '<ЧасовПоВидуВремениЗаМесяц>', cls: 'center spill-next' },
    '14:1': { text: '<Квартал>', cls: 'bold center' },
    '14:33': { text: '<ДнейЗаКвартал>', cls: 'bold center spill-left' },
    '14:34': { text: '<ЧасовЗаКвартал>', cls: 'bold center' },
    '14:35': { text: '<ДнейЗаКварталПоКалендарю>', cls: 'bold center' },
    '14:36': { text: '<ЧасовЗаКварталПоКалендарю>', cls: 'bold center' },
    '14:37': { text: '<НерабочихЗаКварталПоКалендарю>', cls: 'bold center spill-right' },
    '15:33': { text: '<ДнейЗаКварталПоВидуВремени>', cls: 'bold center' },
    '15:34': { text: '<ЧасовЗаКварталПоВидуВремени>', cls: 'bold center spill-right' },
    '16:1': { text: 'Итого за год:', cls: 'bold total' },
    '16:33': { text: '<ДнейЗаГод>', cls: 'bold center spill-left' },
    '16:34': { text: '<ЧасовЗаГод>', cls: 'bold center' },
    '16:35': { text: '<ДнейЗаГодПоКалендарю>', cls: 'bold center' },
    '16:36': { text: '<ЧасовЗаГодПоКалендарю>', cls: 'bold center' },
    '16:37': { text: '<НерабочихЗаГодПоКалендарю>', cls: 'bold center spill-right' },
    '17:33': { text: '<ДнейЗаГод>', cls: 'bold center' },
    '17:34': { text: '<ЧасовЗаГод>', cls: 'bold center spill-right' },
    '19:1': { text: 'Составил:', cls: 'sign' },
    '19:2': { text: '', cls: 'active' },
    '19:23': { text: 'Проверил:', cols: 4, cls: 'sign' }
};

for (let day = 1; day <= 31; day++) {
    cells['10:' + (day + 1)] = { text: String(day), cls: 'head bold center top' };
    cells['11:' + (day + 1)] = { text: '<ИтогоЗаДень' + day + '>', cls: 'center' };
    cells['12:' + (day + 1)] = { text: '<ВидВремениД' + day + '>', cls: 'center low' };
}

function heightOf(row, count) {
    let sum = 0;
    for (let r = row; r < row + count; r++) {
        sum += rowHeights[r] || 17;
    }
    return sum;
}

// black line to the right of the cell that ends in this column
function hasRightEdge(row, col) {
    if (row === 20) return col === 1 || (col >= 32 && col <= 36);
    if (row < 8 || row > 17) return false;
    if (row <= 13) return col < 37;
    return col === 1 || (col >= 32 && col <= 36);
}

const total = colWidths.reduce((a, b) => a + b, NAME_WIDTH + NUM_WIDTH);
let html = `<colgroup><col style="width:${NAME_WIDTH}px"><col style="width:${NUM_WIDTH}px">`;
colWidths.forEach(w => html += `<col style="width:${w}px">`);
html += '</colgroup><thead><tr><th class="corner-name"></th><th class="corner-num"></th>';
colWidths.forEach((w, i) => html += `<th>${i + 1}</th>`);
html += '</tr></thead><tbody>';

const taken = {};
for (let row = 1; row <= ROW_COUNT; row++) {
    const h = heightOf(row, 1);
    const end = areaEnds.includes(row) ? ' area-end' : '';
    html += `<tr${row === 19 ? ' class="selected"' : ''}>`;
    if (areas[row]) {
        const [name, count] = areas[row];
        html += `<th class="name" rowspan="${count}"><div class="area" style="height:${heightOf(row, count)}px">${name}</div></th>`;
    } else if (row > 20) {
        html += '<th class="name"></th>';
    }
    html += `<th class="num${end}"><div class="cell" style="height:${h - 1}px">${row}</div></th>`;

    for (let col = 1; col <= colWidths.length; col++) {
        if (taken[row + ':' + col]) continue;
        const cell = cells[row + ':' + col] || {};
        const cols = cell.cols || 1;
        const rows = cell.rows || 1;
        for (let r = row; r < row + rows; r++) {
            for (let c = col; c < col + cols; c++) taken[r + ':' + c] = true;
        }
        let cls = cell.cls || '';
        if (areaEnds.includes(row + rows - 1)) cls += ' area-end';
        if (hasRightEdge(row, col + cols - 1)) cls += ' edge-right';
        let inner = '';
        if (cell.text) {
            const text = cell.text.replace(/</g, '&lt;').replace(/>/g, '&gt;');
            inner = `<div class="cell" style="height:${heightOf(row, rows) - 1}px">${text}</div>`;
        }
        html += `<td class="${cls.trim()}" colspan="${cols}" rowspan="${rows}">${inner}</td>`;
    }
    html += '</tr>';
}

const grid = document.getElementById('grid');
grid.style.width = total + 'px';
grid.innerHTML = html + '</tbody>';

const headHeight = grid.tHead.offsetHeight;

// printed page ends after column 37 and row 30
const pageWidth = colWidths.slice(0, 37).reduce((a, b) => a + b, NAME_WIDTH + NUM_WIDTH);
document.getElementById('break-v').style.left = (pageWidth - 1) + 'px';
document.getElementById('break-h').style.top = (headHeight + heightOf(1, 30) - 1) + 'px';

// frame around the selected row 19
const selectedTop = headHeight + heightOf(1, 18);
document.getElementById('selection').style.top = (selectedTop - 4) + 'px';
document.getElementById('row-mark').style.top = (selectedTop - 5) + 'px';
```
